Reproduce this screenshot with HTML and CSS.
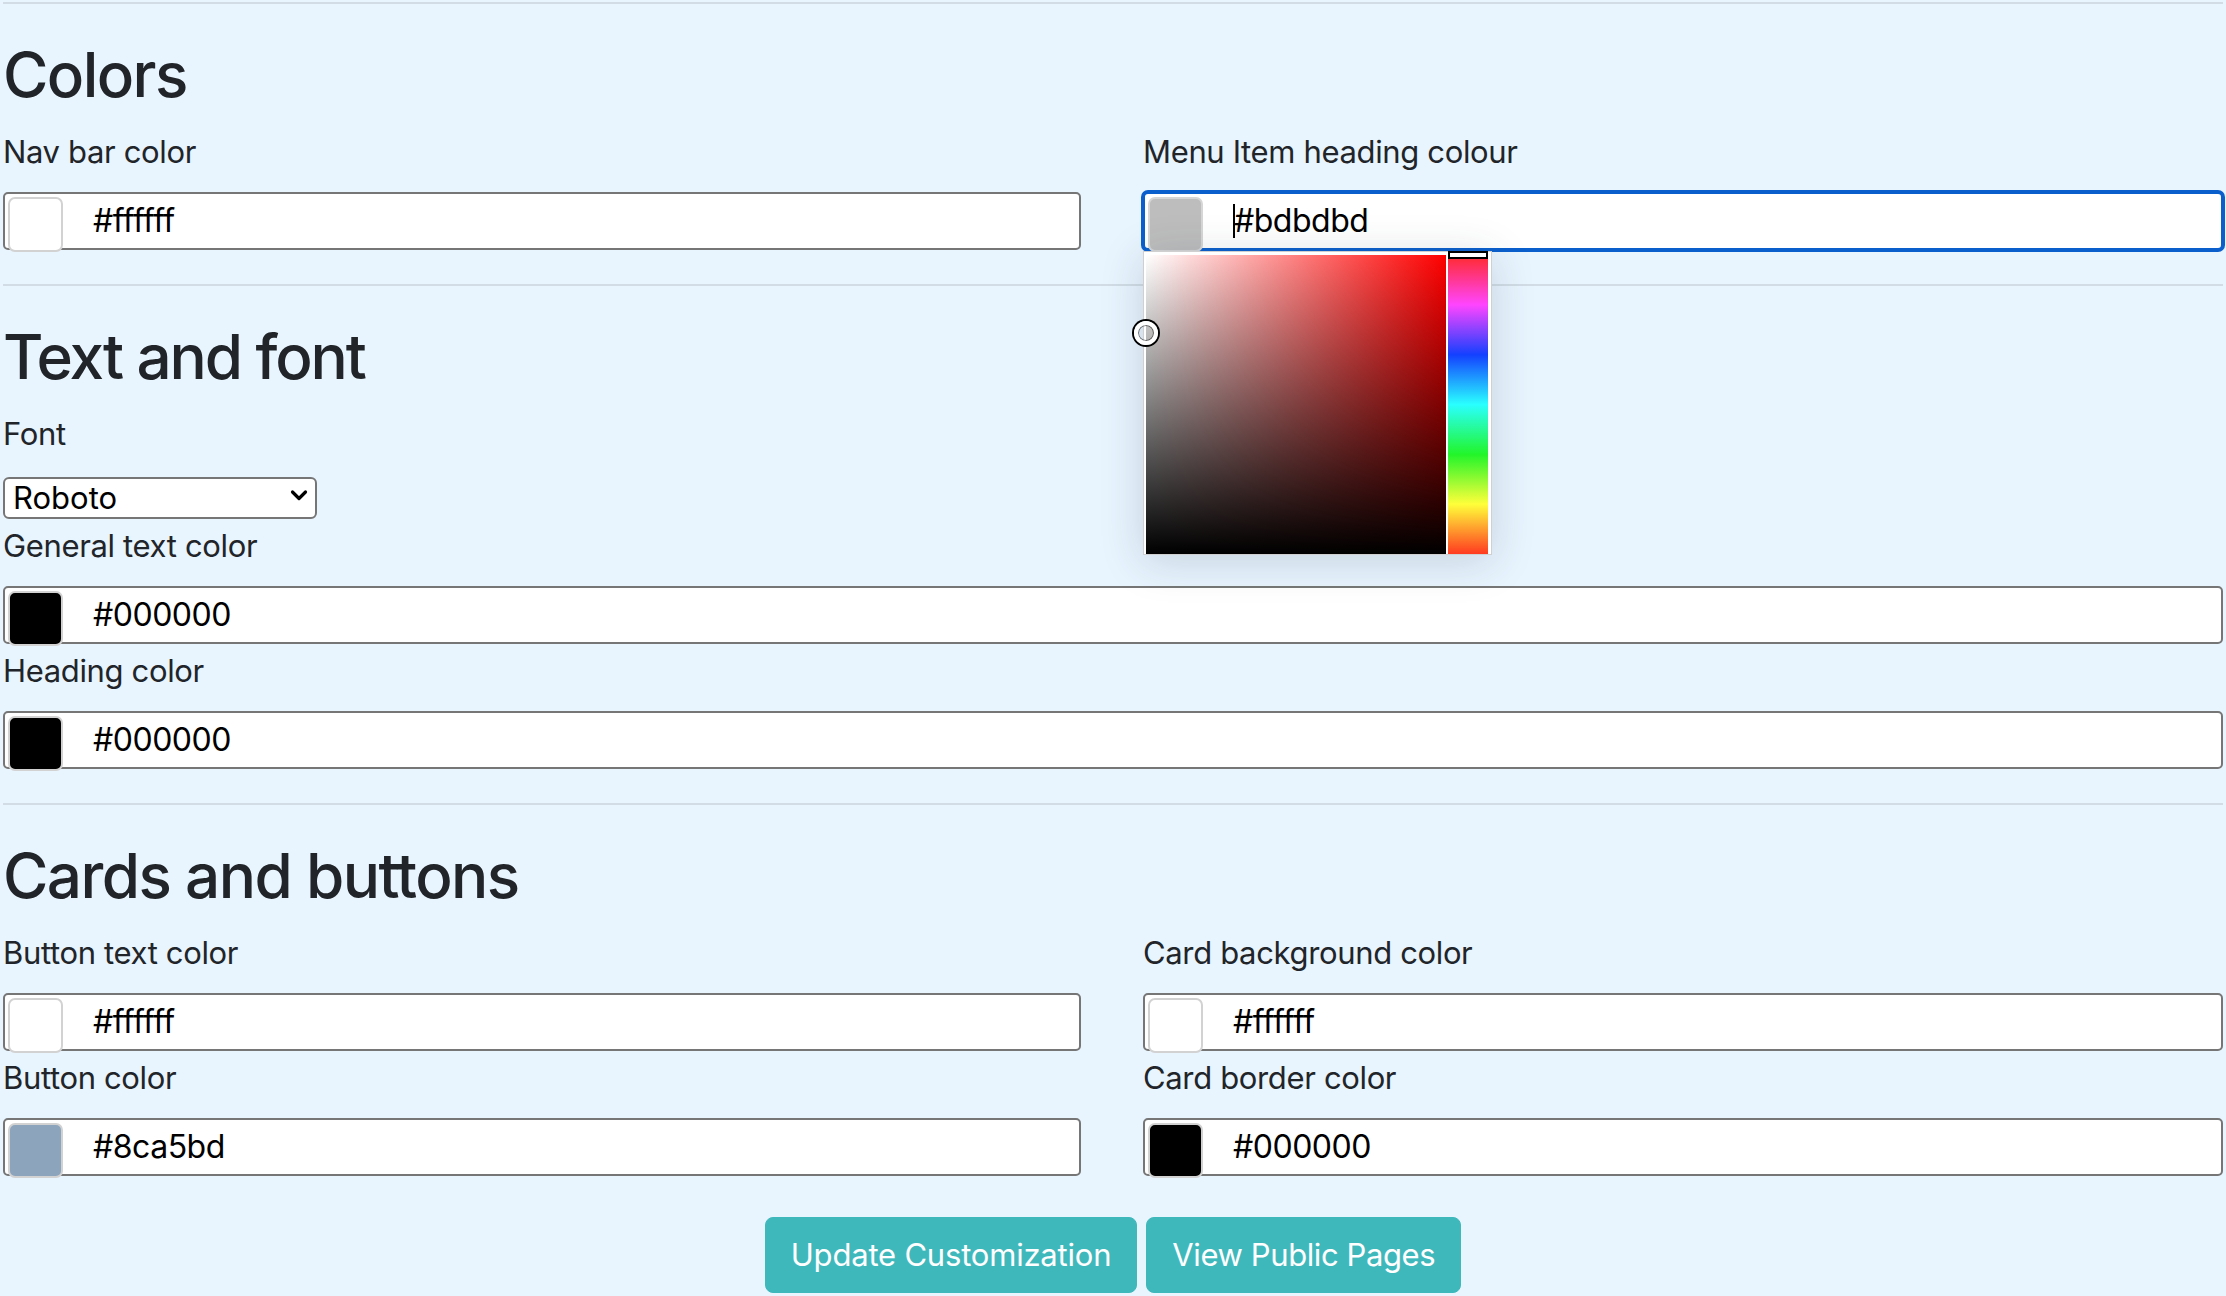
FILE: index.html
```html
<!DOCTYPE html>
<html lang="en">
<head>
<meta charset="utf-8">
<title>Customization</title>
<link rel="stylesheet" href="styles.css">
</head>
<body>
<div class="page">
  <hr class="rule rule-top">
  <section class="section">
    <h2 class="section-title">Colors</h2>
    <div class="row">
      <div class="col">
        <div class="field">
          <label class="field-label">Nav bar color</label>
          <div class="color-input">
            <span class="swatch swatch-white"></span>
            <span class="color-value">#ffffff</span>
          </div>
        </div>
      </div>
      <div class="col">
        <div class="field field-open">
          <label class="field-label">Menu Item heading colour</label>
          <div class="color-input is-focused">
            <span class="swatch swatch-grey"></span>
            <span class="caret"></span><span class="color-value color-value-tight">#bdbdbd</span>
          </div>
          <div class="picker">
            <div class="picker-sv">
              <span class="sv-handle"></span>
            </div>
            <div class="picker-hue">
              <span class="hue-handle"></span>
            </div>
          </div>
        </div>
      </div>
    </div>
  </section>
  <hr class="rule">
  <section class="section">
    <h2 class="section-title title-tight">Text and font</h2>
    <div class="field">
      <label class="field-label">Font</label>
      <div class="select-wrap">
        <select class="select">
          <option>Roboto</option>
        </select>
        <svg class="select-chevron" width="18" height="12" viewBox="0 0 18 12"><path d="M2.5 3 L9 9.5 L15.5 3" fill="none" stroke="#000" stroke-width="3.2" stroke-linecap="round" stroke-linejoin="round"/></svg>
      </div>
    </div>
    <div class="field field-tight">
      <label class="field-label">General text color</label>
      <div class="color-input">
        <span class="swatch swatch-black"></span>
        <span class="color-value">#000000</span>
      </div>
    </div>
    <div class="field field-tight">
      <label class="field-label">Heading color</label>
      <div class="color-input">
        <span class="swatch swatch-black"></span>
        <span class="color-value">#000000</span>
      </div>
    </div>
  </section>
  <hr class="rule">
  <section class="section">
    <h2 class="section-title">Cards and buttons</h2>
    <div class="row">
      <div class="col">
        <div class="field">
          <label class="field-label">Button text color</label>
          <div class="color-input">
            <span class="swatch swatch-white"></span>
            <span class="color-value">#ffffff</span>
          </div>
        </div>
        <div class="field field-tight">
          <label class="field-label">Button color</label>
          <div class="color-input">
            <span class="swatch swatch-steel"></span>
            <span class="color-value">#8ca5bd</span>
          </div>
        </div>
      </div>
      <div class="col">
        <div class="field">
          <label class="field-label">Card background color</label>
          <div class="color-input">
            <span class="swatch swatch-white"></span>
            <span class="color-value">#ffffff</span>
          </div>
        </div>
        <div class="field field-tight">
          <label class="field-label">Card border color</label>
          <div class="color-input">
            <span class="swatch swatch-black"></span>
            <span class="color-value">#000000</span>
          </div>
        </div>
      </div>
    </div>
    <div class="actions">
      <button class="btn btn-wide" type="button">Update Customization</button>
      <button class="btn" type="button">View Public Pages</button>
    </div>
  </section>
</div>
</body>
</html>
```
FILE: styles.css
```css
html, body {
  margin: 0;
  padding: 0;
  background: #e8f4fe;
}

body {
  font-family: Inter, "Liberation Sans", sans-serif;
  color: #212529;
  font-size: 32px;
  line-height: 48px;
}

.page {
  width: 2220px;
  padding: 0 3px;
}

.rule {
  border: 0;
  border-top: 2px solid #d1dce5;
  margin: 34px 0 34px;
  height: 0;
}

.rule-top {
  margin-top: 2px;
}

.section-title {
  font-size: 62px;
  line-height: 74px;
  font-weight: 500;
  letter-spacing: -1.6px;
  margin: 0 0 16px;
  color: #212529;
}

.title-tight {
  letter-spacing: -2.1px;
}

.row {
  display: grid;
  grid-template-columns: 1078px 1080px;
  column-gap: 62px;
}

.field {
  display: flex;
  flex-direction: column;
  position: relative;
}

.field-tight {
  margin-top: 3px;
}

.field-label {
  display: block;
  font-size: 31px;
  line-height: 48px;
  margin-bottom: 16px;
  letter-spacing: -0.35px;
}

.color-input {
  box-sizing: border-box;
  display: flex;
  align-items: flex-start;
  height: 58px;
  border: 2px solid #767676;
  border-radius: 5px;
  background: #fff;
  padding-left: 3px;
  color: #000;
}

.color-input.is-focused {
  border-color: #0b5fcd;
  box-shadow: 0 0 0 2px #0b5fcd;
}

.swatch {
  box-sizing: border-box;
  flex: none;
  width: 55px;
  height: 55px;
  margin-top: 3px;
  margin-right: 30px;
  border: 2px solid #d2d2d2;
  border-radius: 7px;
}

.swatch-white { background: #ffffff; }
.swatch-grey { background: #bdbdbd; border-color: #d6d6d6; }
.swatch-black { background: #000000; }
.swatch-steel { background: #8ca5bd; }

.color-value {
  font-size: 32px;
  line-height: 54px;
  letter-spacing: -0.5px;
}

.caret {
  width: 2px;
  height: 34px;
  margin-top: 10px;
  background: #000;
  margin-right: -1px;
  flex: none;
}

.picker {
  position: absolute;
  left: 0;
  top: calc(100% + 1px);
  z-index: 5;
  box-sizing: border-box;
  width: 349px;
  height: 304px;
  background: #fff;
  border: 1px solid #d0d0d0;
  padding: 3px 3px 0 2px;
  display: flex;
  gap: 2px;
  box-shadow: 0 6px 40px rgba(40, 60, 80, 0.18);
}

.picker-sv {
  position: relative;
  width: 300px;
  height: 299px;
  flex: none;
  background:
    linear-gradient(to bottom, rgba(0,0,0,0), #000),
    linear-gradient(to right, #fff, #ff0000);
}

.sv-handle {
  position: absolute;
  left: -12px;
  top: 66px;
  box-sizing: border-box;
  width: 24px;
  height: 24px;
  border-radius: 50%;
  border: 4px solid #fff;
  box-shadow: 0 0 0 2px #000, inset 0 0 0 1px rgba(0,0,0,0.5);
}

.picker-hue {
  position: relative;
  width: 40px;
  height: 299px;
  flex: none;
  background: linear-gradient(to bottom, #ff2a2a 0%, #ff45ff 16.67%, #1440ff 33.33%, #2affff 50%, #22f52a 66.67%, #ffff3a 83.33%, #ff3a20 100%);
}

.hue-handle {
  position: absolute;
  left: 0;
  top: -4px;
  box-sizing: border-box;
  width: 40px;
  height: 8px;
  border: 2px solid #000;
  background: #fff;
}

.select-wrap {
  position: relative;
  width: 314px;
  height: 42px;
  margin-top: 0;
  margin-bottom: 3px;
}

.select {
  -webkit-appearance: none;
  appearance: none;
  box-sizing: border-box;
  width: 314px;
  height: 42px;
  border: 2px solid #767676;
  border-radius: 6px;
  background: #fff;
  font-family: Inter, "Liberation Sans", sans-serif;
  font-size: 31px;
  color: #000;
  padding: 0 0 0 8px;
  margin: 0;
}

.select-chevron {
  position: absolute;
  right: 9px;
  top: 15px;
  pointer-events: none;
}

.actions {
  display: flex;
  justify-content: center;
  gap: 9px;
  margin-top: 41px;
}

.btn {
  font-family: Inter, "Liberation Sans", sans-serif;
  font-size: 31px;
  line-height: 48px;
  padding: 13px 25px;
  color: #fff;
  background: #3fb8bc;
  border: 1px solid #3fb8bc;
  border-radius: 8px;
  letter-spacing: -0.4px;
}

.btn-wide {
  letter-spacing: -0.2px;
}
```
